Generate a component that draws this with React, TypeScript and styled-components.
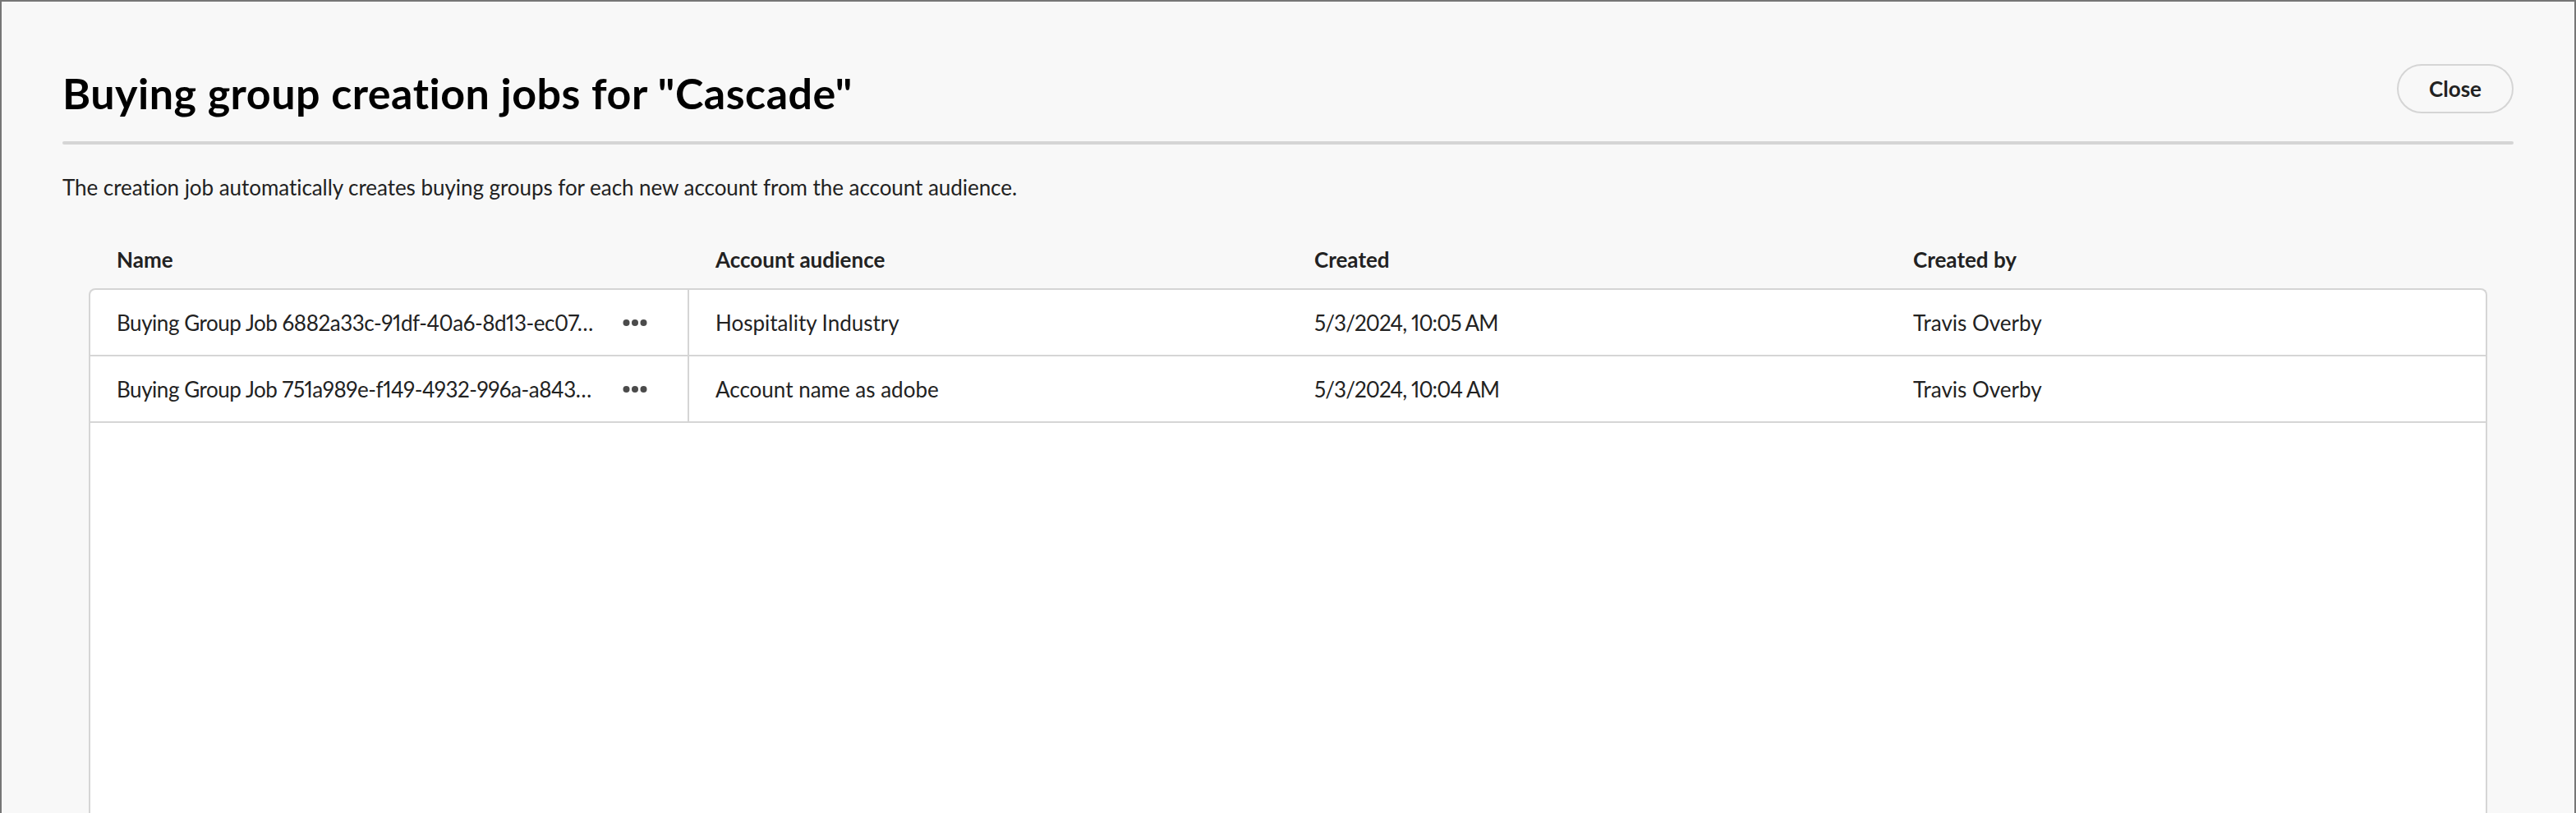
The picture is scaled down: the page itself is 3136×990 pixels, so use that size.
import React from "react";
import styled, { createGlobalStyle } from "styled-components";

const GlobalStyle = createGlobalStyle`
  html, body {
    margin: 0;
    padding: 0;
    overflow: hidden;
    background: #f8f8f8;
  }
  body {
    font-family: Lato, "Liberation Sans", Arial, sans-serif;
    color: #222222;
    font-variant-numeric: proportional-nums;
  }
  * { box-sizing: border-box; }
`;

const Dialog = styled.section`
  display: flex;
  flex-direction: column;
  width: 3136px;
  height: 1060px;
  background: #f8f8f8;
  border: 2px solid #767676;
  border-bottom: none;
  padding: 0 74px;
`;

const Header = styled.header`
  display: flex;
  justify-content: space-between;
  align-items: flex-start;
  padding-top: 76px;
`;

const Title = styled.h1`
  margin: 5px 0 0;
  font-family: Lato, "Liberation Sans", Arial, sans-serif;
  font-weight: 700;
  font-size: 52px;
  line-height: 60px;
  color: #000000;
  letter-spacing: 0.5px;
`;

const CloseButton = styled.button`
  display: flex;
  align-items: center;
  justify-content: center;
  width: 142px;
  height: 60px;
  padding: 0;
  border: 2px solid #d5d5d5;
  border-radius: 30px;
  background: transparent;
  font-family: Lato, "Liberation Sans", Arial, sans-serif;
  font-weight: 700;
  font-size: 26px;
  line-height: 1;
  color: #222222;
  cursor: pointer;
`;

const Divider = styled.hr`
  margin: 29px 0 0;
  height: 4px;
  border: none;
  border-radius: 2px;
  background: #d5d5d5;
`;

const Description = styled.p`
  margin: 34px 0 0;
  font-size: 26px;
  line-height: 36px;
  letter-spacing: -0.05px;
  color: #222222;
`;

const TableWrap = styled.div`
  flex: 1;
  display: flex;
  flex-direction: column;
  margin: 36px 32px 0;
`;

const Columns = styled.div`
  display: grid;
  grid-template-columns: repeat(4, minmax(0, 1fr));
`;

const HeadRow = styled(Columns)`
  padding: 16px 2px 17px;
`;

const HeadCell = styled.div`
  padding: 0 32px;
  font-weight: 700;
  font-size: 26px;
  line-height: 36px;
  color: #222222;
`;

const Body = styled.div`
  flex: 1;
  background: #ffffff;
  border: 2px solid #d5d5d5;
  border-bottom: none;
  border-radius: 8px 8px 0 0;
`;

const Row = styled(Columns)`
  min-height: 81px;
  border-bottom: 2px solid #d5d5d5;
`;

const Cell = styled.div<{ $rule?: boolean; $numeric?: boolean }>`
  display: flex;
  align-items: center;
  min-width: 0;
  padding: 0 32px;
  font-size: 26px;
  line-height: 36px;
  color: #222222;
  letter-spacing: ${(p) => (p.$numeric ? "-0.9px" : "0")};
  border-right: ${(p) => (p.$rule ? "2px solid #d5d5d5" : "none")};
`;

const NameText = styled.span`
  flex: 1;
  min-width: 0;
  white-space: nowrap;
  letter-spacing: -0.45px;
`;

const MoreButton = styled.button`
  flex: none;
  display: flex;
  align-items: center;
  justify-content: center;
  width: 40px;
  height: 48px;
  margin-right: 12px;
  padding: 0;
  border: none;
  background: transparent;
  color: #4b4b4b;
  cursor: pointer;
`;

const MoreIcon = () => (
  <svg width="36" height="12" viewBox="0 0 36 12" aria-hidden="true">
    <circle cx="7.5" cy="6" r="4" fill="currentColor" />
    <circle cx="18" cy="6" r="4" fill="currentColor" />
    <circle cx="28.5" cy="6" r="4" fill="currentColor" />
  </svg>
);

type Job = {
  name: string;
  audience: string;
  created: string;
  createdBy: string;
};

const jobs: Job[] = [
  {
    name: "Buying Group Job 6882a33c-91df-40a6-8d13-ec07…",
    audience: "Hospitality Industry",
    created: "5/3/2024, 10:05 AM",
    createdBy: "Travis Overby",
  },
  {
    name: "Buying Group Job 751a989e-f149-4932-996a-a843…",
    audience: "Account name as adobe",
    created: "5/3/2024, 10:04 AM",
    createdBy: "Travis Overby",
  },
];

export default function App() {
  return (
    <>
      <GlobalStyle />
      <Dialog>
        <Header>
          <Title>Buying group creation jobs for "Cascade"</Title>
          <CloseButton>Close</CloseButton>
        </Header>
        <Divider />
        <Description>
          The creation job automatically creates buying groups for each new account from the account audience.
        </Description>
        <TableWrap>
          <HeadRow>
            <HeadCell>Name</HeadCell>
            <HeadCell>Account audience</HeadCell>
            <HeadCell>Created</HeadCell>
            <HeadCell>Created by</HeadCell>
          </HeadRow>
          <Body>
            {jobs.map((job) => (
              <Row key={job.name}>
                <Cell $rule>
                  <NameText>{job.name}</NameText>
                  <MoreButton aria-label="More actions">
                    <MoreIcon />
                  </MoreButton>
                </Cell>
                <Cell>{job.audience}</Cell>
                <Cell $numeric>{job.created}</Cell>
                <Cell>{job.createdBy}</Cell>
              </Row>
            ))}
          </Body>
        </TableWrap>
      </Dialog>
    </>
  );
}
